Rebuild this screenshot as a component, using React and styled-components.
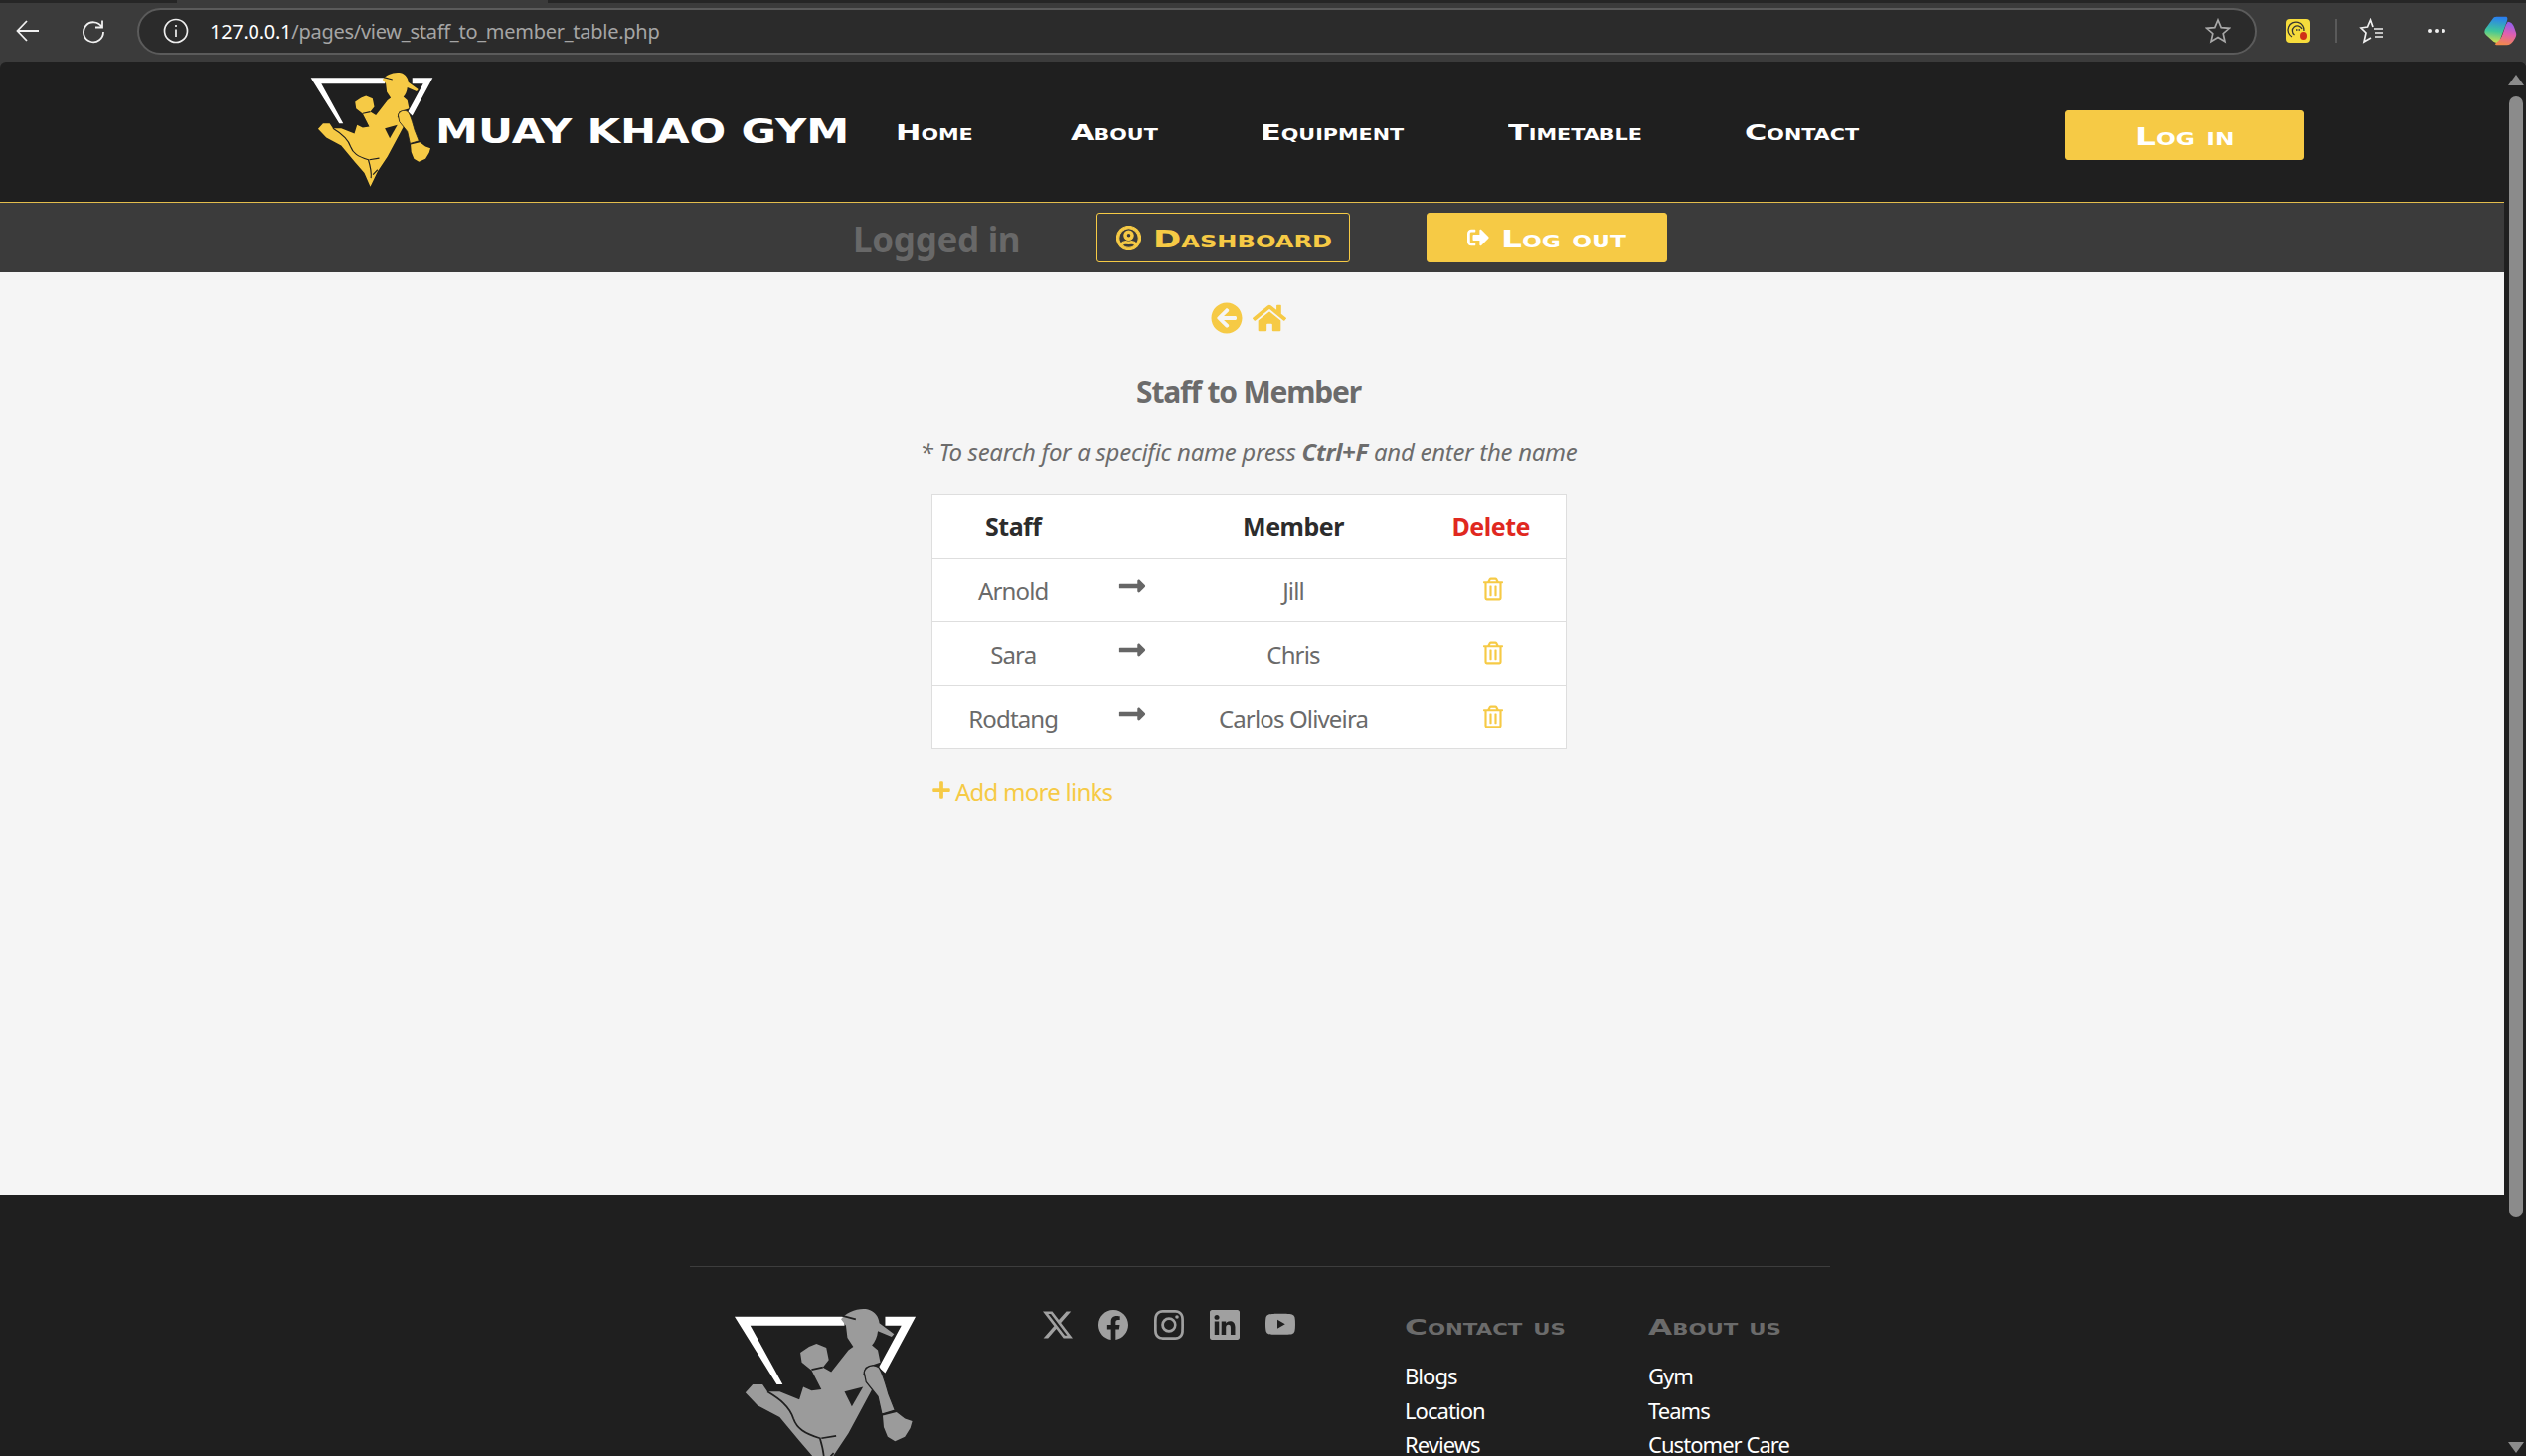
import React from "react";
import styled, { createGlobalStyle, css } from "styled-components";
import { FaArrowCircleLeft, FaHome, FaLongArrowAltRight, FaPlus, FaRegTrashAlt, FaRegUserCircle, FaSignOutAlt } from "react-icons/fa";
import { BsTwitterX, BsFacebook, BsInstagram, BsLinkedin, BsYoutube } from "react-icons/bs";

const Y = "#f6ca45";
const DARK = "#1f1f1f";
const BODY = '"Noto Sans", "Open Sans", sans-serif';

const Global = createGlobalStyle`
  html, body { margin: 0; padding: 0; height: 100%; overflow: hidden; background: #3b3b3b; }
  * { box-sizing: border-box; }
`;

const wide = css`
  display: inline-block;
  font-family: "DejaVu Sans", sans-serif;
  font-weight: 700;
  font-variant: small-caps;
  white-space: nowrap;
  transform-origin: left center;
`;

const Shell = styled.div`
  width: 2541px;
  height: 1465px;
  overflow: hidden;
  display: flex;
  flex-direction: column;
  background: #3b3b3b;
`;
const TabEdge = styled.div`
  height: 3px;
  flex: none;
  display: flex;
`;
const TabPiece = styled.div`
  width: ${(p) => p.$w}px;
  flex: ${(p) => (p.$w ? "none" : 1)};
  background: ${(p) => (p.$dark ? "#262626" : "#3b3b3b")};
`;
const Chrome = styled.div`
  height: 59px;
  flex: none;
  position: relative;
  display: flex;
  align-items: center;
  padding-bottom: 3px;
`;
const ChromeBtn = styled.div`
  width: ${(p) => p.$w}px;
  flex: none;
  display: flex;
  justify-content: center;
  align-items: center;
  color: #e8e8e8;
`;
const Address = styled.div`
  width: 2132px;
  height: 47px;
  flex: none;
  margin-left: 6px;
  border: 2px solid #5b5b5b;
  border-radius: 24px;
  background: #2b2b2b;
  display: flex;
  align-items: center;
  padding: 0 24px 0 24px;
  font: 20px/1 ${BODY};
  letter-spacing: -0.27px;
`;
const UrlHost = styled.span`
  color: #fff;
  margin-left: 21px;
  transform: translateY(1px);
`;
const UrlPath = styled.span`
  color: #a5a5a5;
  transform: translateY(1px);
`;
const Spacer = styled.div`
  flex: 1;
`;
const Divider = styled.div`
  width: 2px;
  height: 24px;
  margin-left: -5px;
  flex: none;
  background: #5a5a5a;
`;
const Viewport = styled.div`
  flex: 1;
  display: flex;
  min-height: 0;
  background: ${DARK};
  border-radius: 6px 6px 0 0;
  overflow: hidden;
`;
const Page = styled.div`
  width: 2519px;
  flex: none;
  overflow: hidden;
  display: flex;
  flex-direction: column;
`;
const Scrollbar = styled.div`
  flex: 1;
  position: relative;
  background: ${DARK};
`;
const ScrollUp = styled.div`
  position: absolute;
  left: 4px;
  top: 13px;
  border-left: 8px solid transparent;
  border-right: 8px solid transparent;
  border-bottom: 11px solid #8b8b8b;
`;
const ScrollDown = styled(ScrollUp)`
  top: 1389px;
  border-bottom: 0;
  border-top: 11px solid #8b8b8b;
`;
const Thumb = styled.div`
  position: absolute;
  left: 5px;
  top: 35px;
  width: 14px;
  height: 1128px;
  border-radius: 7px;
  background: #8b8b8b;
`;

const Header = styled.header`
  height: 142px;
  flex: none;
  display: flex;
  align-items: flex-start;
  padding-left: 310px;
  border-bottom: 1px solid #e3bd4c;
`;
const BrandLogo = styled.div`
  width: 128px;
  margin-top: 9px;
  flex: none;
`;
const BrandName = styled.div`
  ${wide}
  font-variant: normal;
  font-size: 33px;
  line-height: 38px;
  color: #fff;
  margin: 52px 0 0 0;
  width: 463px;
  flex: none;
  transform: scaleX(1.31);
`;
const Nav = styled.nav`
  display: flex;
  flex: none;
  margin-top: 57px;
`;
const NavItem = styled.a`
  width: ${(p) => p.$w}px;
  flex: none;
  color: #fff;
  font-size: 22px;
  line-height: 30px;
  ${wide}
  transform: scaleX(1.38);
`;
const Button = styled.a`
  height: 50px;
  width: ${(p) => p.$w}px;
  flex: none;
  display: flex;
  align-items: center;
  justify-content: center;
  gap: 12px;
  border-radius: 3px;
  background: ${(p) => (p.$outline ? "transparent" : Y)};
  border: 1px solid ${Y};
  color: ${(p) => (p.$outline ? Y : "#fff")};
`;
const LoginButton = styled(Button)`
  margin: 49px 0 0 205px;
`;
const BtnLabel = styled.span`
  ${wide}
  font-size: 24px;
  line-height: 1;
  width: ${(p) => p.$w}px;
  transform: scaleX(${(p) => p.$sx});
  position: relative;
  top: 2px;
`;
const UserIcon = styled(FaRegUserCircle)`
  width: 25px;
  height: 25px;
  stroke: currentColor;
  stroke-width: 22px;
`;
const SubBar = styled.div`
  height: 70px;
  flex: none;
  background: #3b3b3b;
  display: flex;
  align-items: center;
  padding-left: 858px;
`;
const LoggedIn = styled.div`
  width: 245px;
  flex: none;
  padding-top: 3px;
  font: 700 35px/1 ${BODY};
  letter-spacing: -0.3px;
  color: #686868;
`;
const LogoutButton = styled(Button)`
  margin-left: 77px;
`;
const Main = styled.main`
  height: 928px;
  flex: none;
  background: #f5f5f5;
  display: flex;
  flex-direction: column;
  align-items: center;
  padding: 29px 7px 0 0;
`;
const IconRow = styled.div`
  display: flex;
  align-items: center;
  gap: 10px;
  height: 33px;
  margin-left: -1px;
  color: ${Y};
`;
const Title = styled.h1`
  margin: 38px 0 0;
  font: 700 30px/40px ${BODY};
  letter-spacing: -1.2px;
  color: #6b6b6b;
`;
const Note = styled.p`
  margin: 23px 0 0;
  font: italic 400 24px/36px ${BODY};
  letter-spacing: -0.3px;
  color: #6c6c6c;
`;
const Table = styled.table`
  margin-top: 24px;
  width: 638px;
  table-layout: fixed;
  border-collapse: collapse;
  background: #fff;
  border: 1px solid #dedede;
`;
const Row = styled.tr`
  height: 64px;
  border-top: 1px solid #dedede;
`;
const HeadRow = styled.tr`
  height: 64px;
`;
const Col = styled.col`
  width: ${(p) => p.$w}px;
`;
const Th = styled.th`
  padding: 0;
  text-align: center;
  font: 700 25px/1 ${BODY};
  letter-spacing: -0.5px;
  color: ${(p) => (p.$red ? "#e0281f" : "#2c2c2c")};
`;
const Td = styled.td`
  padding: 2px 0 0;
  text-align: center;
  font: 400 24px/1 ${BODY};
  letter-spacing: -0.85px;
  color: #6a6a6a;
`;
const ArrowIcon = styled(FaLongArrowAltRight)`
  display: block;
  margin: -10px auto 0;
  width: 30px;
  height: 30px;
  color: #666;
`;
const TrashIcon = styled(FaRegTrashAlt)`
  display: block;
  margin: -4px auto 0 auto;
  transform: translateX(2px);
  width: 20px;
  height: 24px;
  color: ${Y};
`;
const AddMore = styled.a`
  width: 638px;
  margin-top: 25px;
  display: flex;
  align-items: center;
  gap: 4px;
  font: 400 24px/36px ${BODY};
  letter-spacing: -0.75px;
  color: ${Y};
`;
const PlusIcon = styled(FaPlus)`
  width: 20px;
  height: 20px;
  margin-top: -5px;
`;
const Footer = styled.footer`
  flex: 1;
  background: ${DARK};
  padding: 72px 0 0 694px;
`;
const FooterInner = styled.div`
  width: 1147px;
  border-top: 1px solid #3d3d3d;
  display: flex;
  align-items: flex-start;
  padding: 39px 0 0 41px;
`;
const FooterLogo = styled.div`
  width: 190px;
  flex: none;
`;
const Socials = styled.div`
  display: flex;
  gap: 26px;
  margin: 4px 0 0 124px;
  width: 364px;
  flex: none;
  color: #a0a0a0;
`;
const FooterCol = styled.div`
  width: ${(p) => p.$w}px;
  flex: none;
  padding-top: 10px;
`;
const FooterHead = styled.div`
  ${wide}
  font-size: 22px;
  line-height: 24px;
  color: #6b6b6b;
  transform: scaleX(1.42);
`;
const FooterLink = styled.a`
  display: block;
  font: 400 22px/34.5px ${BODY};
  letter-spacing: -0.95px;
  color: #fff;
  &:first-of-type {
    margin-top: 19px;
  }
`;

const Logo = ({ fill }) => (
  <svg viewBox="30 35 385 360" width="100%" style={{ display: "block" }}>
    <path d="M38 57H262V75H70L136 195H124ZM345 57H407L345 172L332 160L378 75H345Z" fill="#fff" />
    <path
      d="M255 62C265 48 290 38 310 42C325 46 332 58 333 70L363 92L358 98L330 86C329 98 324 108 318 115L330 125L335 150L305 160L300 175L322 198L270 295L240 340L218 386L200 345L170 310L130 262L85 238L60 212L75 195L95 195L105 210L130 210L170 226L178 200L195 208L215 205L195 166L175 150L172 130L190 118L205 112L225 120L230 145L218 160L235 170L270 125L280 118L268 100L265 75Z"
      fill={fill}
    />
    <path
      d="M302 170C305 158 320 152 332 160C340 172 345 190 352 215L365 248L338 256L330 220L306 190Z"
      fill={fill}
      stroke={DARK}
      strokeWidth="2.5"
    />
    <path d="M340 259L368 252L385 265L400 270L396 284L385 302L365 311L350 302L342 282Z" fill={fill} />
    <path d="M262 210L300 200L277 240Z" fill={DARK} />
    <path d="M105 210C130 225 150 240 158 265C165 285 180 295 212 305C218 325 222 345 220 360M226 350L240 335M215 305L245 300M195 165L218 160M258 55L285 62" stroke={DARK} strokeWidth="3.5" fill="none" />
  </svg>
);

const Copilot = () => (
  <svg width="33" height="30" viewBox="0 0 32 36" preserveAspectRatio="none">
    <defs>
      <linearGradient id="cpa" x1="0.5" y1="0" x2="0.4" y2="1">
        <stop offset="0" stopColor="#2a7ff0" />
        <stop offset="0.55" stopColor="#3ec79a" />
        <stop offset="1" stopColor="#d7e04a" />
      </linearGradient>
      <linearGradient id="cpb" x1="0.6" y1="0" x2="0.4" y2="1">
        <stop offset="0" stopColor="#8d5ff0" />
        <stop offset="0.5" stopColor="#e05fb0" />
        <stop offset="1" stopColor="#f28a4a" />
      </linearGradient>
    </defs>
    <path d="M12 1H21C23 1 23 4 22 7L15 30C14 33 11 33 9 31L2 23C0 21 0 19 1 16L8 4C9 2 10 1 12 1Z" fill="url(#cpa)" />
    <path d="M23 7C26 7 28 10 29 13L31 20C32 24 30 27 28 31C26 34 25 35 22 35H13C10 35 10 34 12 32C15 30 17 26 18 22L21 11Z" fill="url(#cpb)" />
  </svg>
);

const ROWS = [
  ["Arnold", "Jill"],
  ["Sara", "Chris"],
  ["Rodtang", "Carlos Oliveira"],
];

export default function App() {
  return (
    <Shell>
      <Global />
      <TabEdge>
        <TabPiece $dark $w={178} />
        <TabPiece $w={373} />
        <TabPiece $dark />
      </TabEdge>
      <Chrome>
        <ChromeBtn $w={56}>
          <svg width="26" height="24" viewBox="0 0 26 24" fill="none" stroke="#f0f0f0" strokeWidth="1.8">
            <path d="M24 12H3M12 2L2.5 12L12 22" />
          </svg>
        </ChromeBtn>
        <ChromeBtn $w={76}>
          <svg width="26" height="26" viewBox="0 0 26 26" fill="none" stroke="#f0f0f0" strokeWidth="1.8">
            <path d="M21.5 9A10 10 0 1 0 23 14M22 2.5V9.5H15" />
          </svg>
        </ChromeBtn>
        <Address>
          <svg width="26" height="26" viewBox="0 0 26 26" fill="none" stroke="#eee" strokeWidth="1.7">
            <circle cx="13" cy="13" r="11.5" />
            <path d="M13 11.5V19M13 7V9" />
          </svg>
          <UrlHost>127.0.0.1</UrlHost>
          <UrlPath>/pages/view_staff_to_member_table.php</UrlPath>
          <Spacer />
          <svg width="26" height="26" viewBox="0 0 26 26" fill="none" stroke="#a8a8a8" strokeWidth="1.7">
            <path d="M13 2L16.2 9.6L24.4 10.3L18.2 15.7L20 23.8L13 19.5L6 23.8L7.8 15.7L1.6 10.3L9.8 9.6Z" />
          </svg>
        </Address>
        <ChromeBtn $w={84}>
          <svg width="24" height="24" viewBox="0 0 24 24">
            <rect width="24" height="24" rx="4" fill="#f6dc3c" />
            <path d="M6 18A8 8 0 1 1 18 12M8.5 16A5 5 0 1 1 16 10" fill="none" stroke="#333" strokeWidth="1.3" />
            <path d="M10 11H14" stroke="#333" strokeWidth="1.5" strokeDasharray="1.5 1" />
            <ellipse cx="17.5" cy="17" rx="3.5" ry="4" fill="#cf2f18" />
          </svg>
        </ChromeBtn>
        <Divider />
        <ChromeBtn $w={70}>
          <svg width="26" height="26" viewBox="0 0 26 26" fill="none" stroke="#f0f0f0" strokeWidth="1.7">
            <path d="M14 9L11.5 2L8.5 9L2 10L7 15L5 24L12 20M15 11H24M16 15H24M16 19H24" />
          </svg>
        </ChromeBtn>
        <ChromeBtn $w={60}>
          <svg width="20" height="6" viewBox="0 0 20 6" fill="#f0f0f0">
            <circle cx="3" cy="3" r="2" />
            <circle cx="10" cy="3" r="2" />
            <circle cx="17" cy="3" r="2" />
          </svg>
        </ChromeBtn>
        <ChromeBtn $w={68}>
          <Copilot />
        </ChromeBtn>
      </Chrome>
      <Viewport>
        <Page>
          <Header>
            <BrandLogo>
              <Logo fill={Y} />
            </BrandLogo>
            <BrandName>MUAY KHAO GYM</BrandName>
            <Nav>
              <NavItem $w={176}>Home</NavItem>
              <NavItem $w={191}>About</NavItem>
              <NavItem $w={249}>Equipment</NavItem>
              <NavItem $w={238}>Timetable</NavItem>
              <NavItem $w={117}>Contact</NavItem>
            </Nav>
            <LoginButton $w={241}>
              <BtnLabel $w={99} $sx={1.37}>Log in</BtnLabel>
            </LoginButton>
          </Header>
          <SubBar>
            <LoggedIn>Logged in</LoggedIn>
            <Button $outline $w={255}>
              <UserIcon />
              <BtnLabel $w={178} $sx={1.42}>Dashboard</BtnLabel>
            </Button>
            <LogoutButton $w={242}>
              <FaSignOutAlt size={22} />
              <BtnLabel $w={126} $sx={1.37}>Log out</BtnLabel>
            </LogoutButton>
          </SubBar>
          <Main>
            <IconRow>
              <FaArrowCircleLeft size={32} />
              <FaHome size={34} />
            </IconRow>
            <Title>Staff to Member</Title>
            <Note>
              * To search for a specific name press <b>Ctrl+F</b> and enter the name
            </Note>
            <Table>
              <colgroup>
                <Col $w={164} />
                <Col $w={76} />
                <Col $w={248} />
                <Col $w={150} />
              </colgroup>
              <tbody>
                <HeadRow>
                  <Th>Staff</Th>
                  <Th />
                  <Th>Member</Th>
                  <Th $red>Delete</Th>
                </HeadRow>
                {ROWS.map(([a, b]) => (
                  <Row key={a}>
                    <Td>{a}</Td>
                    <Td>
                      <ArrowIcon />
                    </Td>
                    <Td>{b}</Td>
                    <Td>
                      <TrashIcon />
                    </Td>
                  </Row>
                ))}
              </tbody>
            </Table>
            <AddMore>
              <PlusIcon />
              Add more links
            </AddMore>
          </Main>
          <Footer>
            <FooterInner>
              <FooterLogo>
                <Logo fill="#9b9b9b" />
              </FooterLogo>
              <Socials>
                <BsTwitterX size={30} />
                <BsFacebook size={30} />
                <BsInstagram size={30} />
                <BsLinkedin size={30} />
                <BsYoutube size={30} />
              </Socials>
              <FooterCol $w={245}>
                <FooterHead>Contact us</FooterHead>
                <FooterLink>Blogs</FooterLink>
                <FooterLink>Location</FooterLink>
                <FooterLink>Reviews</FooterLink>
              </FooterCol>
              <FooterCol $w={183}>
                <FooterHead>About us</FooterHead>
                <FooterLink>Gym</FooterLink>
                <FooterLink>Teams</FooterLink>
                <FooterLink>Customer Care</FooterLink>
              </FooterCol>
            </FooterInner>
          </Footer>
        </Page>
        <Scrollbar>
          <ScrollUp />
          <Thumb />
          <ScrollDown />
        </Scrollbar>
      </Viewport>
    </Shell>
  );
}
